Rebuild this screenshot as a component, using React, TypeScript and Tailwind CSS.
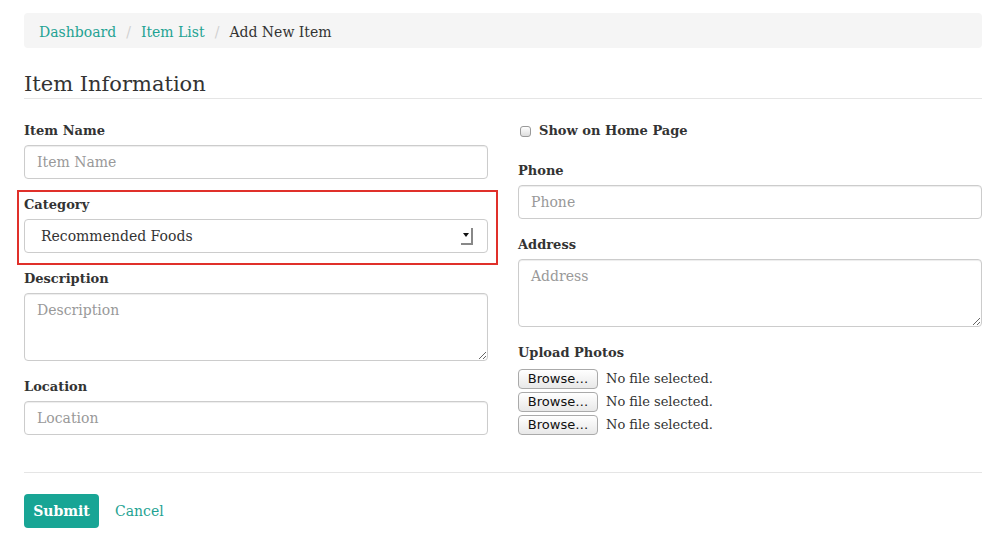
import React from "react";

const serif = { fontFamily: '"DejaVu Serif", "Liberation Serif", serif' };

function Label({ children }: { children: React.ReactNode }) {
  return (
    <div className="h-[20px] pt-[4px] mb-[6px] flex items-center text-[13px] font-bold text-[#333]" style={serif}>
      {children}
    </div>
  );
}

function TextInput({ placeholder }: { placeholder: string }) {
  return (
    <input
      placeholder={placeholder}
      className="w-full h-[34px] px-3 rounded-[4px] border border-[#ccc] bg-white text-[14px] text-[#555] placeholder:text-[#999] outline-none shadow-[inset_0_1px_1px_rgba(0,0,0,0.075)]"
      style={serif}
    />
  );
}

function TextArea({ placeholder }: { placeholder: string }) {
  return (
    <textarea
      placeholder={placeholder}
      className="block w-full h-[68px] px-3 py-[6px] rounded-[4px] border border-[#ccc] bg-white text-[14px] text-[#555] placeholder:text-[#999] outline-none shadow-[inset_0_1px_1px_rgba(0,0,0,0.075)]"
      style={serif}
    />
  );
}

function FileRow() {
  return (
    <div className="h-[23px] flex items-center gap-[8px] pt-[1px]">
      <div
        className="h-[20px] w-[80px] flex items-center justify-center rounded-[4px] border border-[#aaa] bg-gradient-to-b from-white to-[#e8e8e8] text-[13px] text-[#111]"
        style={{ fontFamily: '"DejaVu Sans", "Liberation Sans", sans-serif' }}
      >
        Browse…
      </div>
      <span className="text-[13px] text-[#333]" style={serif}>No file selected.</span>
    </div>
  );
}

export default function App() {
  return (
    <div className="min-h-[547px] bg-white pl-6 pr-4 pt-[13px] text-[#333]" style={serif}>
      {/* breadcrumb */}
      <div className="h-[35px] rounded-[4px] bg-[#f5f5f5] px-[15px] pt-[3px] flex items-center text-[14px]">
        <span className="text-[#1fa393]">Dashboard</span>
        <span className="px-[10px] text-[#d0d0d0]">/</span>
        <span className="text-[#1fa393]">Item List</span>
        <span className="px-[10px] text-[#d0d0d0]">/</span>
        <span className="text-[#333]">Add New Item</span>
      </div>

      {/* heading */}
      <div className="mt-[21px] h-[30px] border-b border-[#e5e5e5] flex items-start">
        <h1 className="text-[21px] leading-[30px] text-[#333]">Item Information</h1>
      </div>

      <div className="mt-[20px] grid grid-cols-2 gap-[30px]">
        {/* left column */}
        <div className="flex flex-col">
          <Label>Item Name</Label>
          <TextInput placeholder="Item Name" />

          <div className="relative mt-[14px]">
            <div className="absolute -left-[7px] -top-[3px] -right-[10px] -bottom-[12px] border-2 border-[#e0302a] pointer-events-none" />
            <Label>Category</Label>
            <div className="h-[34px] rounded-[4px] border border-[#ccc] bg-white flex items-center pl-[16px] pr-[14px]">
              <p className="flex-1 font-['DejaVu_Serif',serif] text-[14px] text-[#333]">Recommended Foods</p>
              <div className="w-[12px] h-[17px] bg-white border-r-2 border-b-2 border-[#888] flex items-center justify-center">
                <div className="w-0 h-0 border-l-[3px] border-r-[3px] border-t-[4px] border-l-transparent border-r-transparent border-t-[#111]" />
              </div>
            </div>
          </div>

          <div className="mt-[14px]">
            <Label>Description</Label>
            <TextArea placeholder="Description" />
          </div>

          <div className="mt-[14px]">
            <Label>Location</Label>
            <TextInput placeholder="Location" />
          </div>
        </div>

        {/* right column */}
        <div className="flex flex-col">
          <div className="h-[20px] pt-[4px] flex items-center gap-[8px] pl-[2px]">
            <div className="w-[11px] h-[11px] rounded-[3px] border border-[#999] bg-gradient-to-b from-white to-[#ddd]" />
            <span className="text-[13px] font-bold text-[#333]">Show on Home Page</span>
          </div>

          <div className="mt-[20px]">
            <Label>Phone</Label>
            <TextInput placeholder="Phone" />
          </div>

          <div className="mt-[14px]">
            <Label>Address</Label>
            <TextArea placeholder="Address" />
          </div>

          <div className="mt-[14px]">
            <Label>Upload Photos</Label>
            <FileRow />
            <FileRow />
            <FileRow />
          </div>
        </div>
      </div>

      {/* footer */}
      <div className="mt-[36px] border-t border-[#e5e5e5] pt-[21px] flex items-center gap-[16px]">
        <button className="h-[34px] w-[75px] rounded-[4px] bg-[#18a595] text-white text-[14px] font-bold" style={serif}>
          Submit
        </button>
        <span className="text-[14px] text-[#1fa393]">Cancel</span>
      </div>
    </div>
  );
}
